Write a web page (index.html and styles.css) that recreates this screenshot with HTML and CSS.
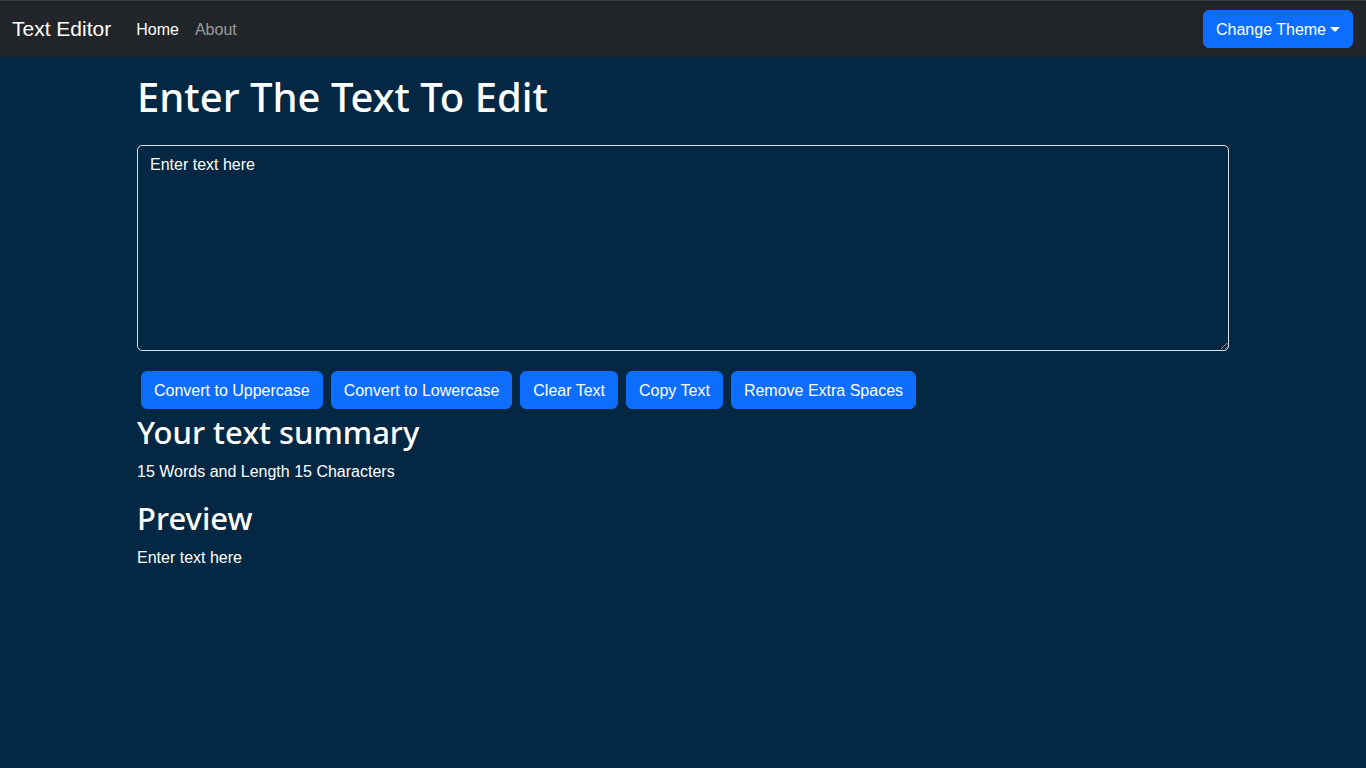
FILE: index.html
```html
<!DOCTYPE html>
<html lang="en">
<head>
<meta charset="utf-8">
<title>Text Editor</title>
<link rel="stylesheet" href="styles.css">
</head>
<body>
<nav class="navbar">
  <div class="nav-inner">
    <a class="brand" href="#">Text Editor</a>
    <ul class="nav-links">
      <li><a class="nav-link active" href="#">Home</a></li>
      <li><a class="nav-link" href="#">About</a></li>
    </ul>
    <button class="btn btn-primary dropdown-toggle" type="button">Change Theme</button>
  </div>
</nav>
<main class="container">
  <h1 class="title">Enter The Text To Edit</h1>
  <div class="field">
    <textarea class="editor" rows="8">Enter text here</textarea>
  </div>
  <div class="actions">
    <button class="btn btn-primary">Convert to Uppercase</button>
    <button class="btn btn-primary">Convert to Lowercase</button>
    <button class="btn btn-primary">Clear Text</button>
    <button class="btn btn-primary">Copy Text</button>
    <button class="btn btn-primary">Remove Extra Spaces</button>
  </div>
  <section class="summary">
    <h2 class="subtitle">Your text summary</h2>
    <p class="para">15 Words and Length 15 Characters</p>
    <h2 class="subtitle">Preview</h2>
    <p class="para">Enter text here</p>
  </section>
</main>
</body>
</html>
```

FILE: styles.css
```css
* { box-sizing: border-box; }
html, body { margin: 0; padding: 0; }
body {
  background: #042743;
  color: #ffffff;
  font-family: "Liberation Sans", Arial, sans-serif;
  font-size: 16px;
  line-height: 1.5;
  min-height: 768px;
}
.navbar {
  background: #212529;
  border-top: 1px solid #3b3e42;
  padding: 8px 0;
}
.nav-inner {
  display: flex;
  align-items: center;
  padding: 0 13px 0 12px;
}
.brand {
  color: #fff;
  text-decoration: none;
  font-size: 21px;
  line-height: 30px;
  padding: 5px 0;
  margin-right: 17px;
}
.nav-links {
  display: flex;
  list-style: none;
  margin: 0;
  padding: 0;
  flex: 1;
}
.nav-link {
  display: block;
  padding: 9px 8px 7px;
  color: rgba(255,255,255,0.55);
  text-decoration: none;
}
.nav-link.active { color: #fff; }
.btn {
  font-family: inherit;
  font-size: 16px;
  line-height: 24px;
  padding: 7px 12px 5px;
  border: 1px solid transparent;
  border-radius: 6px;
  cursor: pointer;
}
.btn-primary {
  background: #0d6efd;
  border-color: #0d6efd;
  color: #fff;
}
.dropdown-toggle::after {
  content: "";
  display: inline-block;
  margin-left: 4px;
  vertical-align: 3px;
  border-top: 5px solid #fff;
  border-left: 5px solid transparent;
  border-right: 5px solid transparent;
}
.container {
  max-width: 1092px;
  margin: 16px auto 0;
}
.title {
  font-family: "Noto Sans", "Liberation Sans", sans-serif;
  font-size: 40px;
  font-weight: 500;
  line-height: 48px;
  margin: 0 0 8px;
}
.field { margin: 24px 0 16px; }
.editor {
  display: block;
  width: 100%;
  height: 206px;
  background: #042743;
  color: #fff;
  border: 1px solid #dee2e6;
  border-radius: 5px;
  padding: 7px 12px 5px;
  font-family: inherit;
  font-size: 16px;
  line-height: 1.5;
  resize: vertical;
}
.actions {
  display: flex;
  flex-wrap: wrap;
}
.actions .btn { margin: 4px; }
.subtitle {
  font-family: "Noto Sans", "Liberation Sans", sans-serif;
  font-size: 31px;
  font-weight: 500;
  line-height: 38px;
  margin: 0 0 8px;
}
.para {
  margin: 0 0 16px;
  padding-top: 1px;
  height: 24px;
}
```
